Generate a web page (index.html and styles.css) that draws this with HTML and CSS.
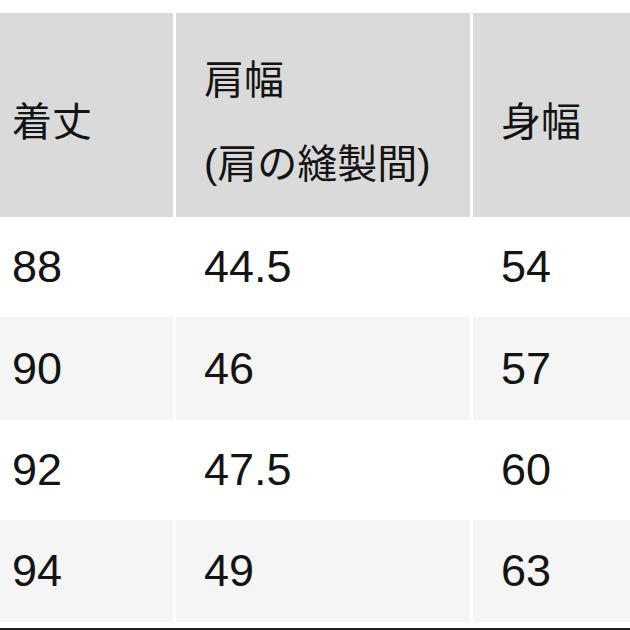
FILE: index.html
```html
<!DOCTYPE html>
<html lang="ja">
<head>
<meta charset="utf-8">
<link rel="stylesheet" href="styles.css">
</head>
<body>
<div class="page">
  <div class="table">
    <div class="cell head first"><span>着丈</span></div>
    <div class="cell head"><span>肩幅<br>(肩の縫製間)</span></div>
    <div class="cell head"><span>身幅</span></div>

    <div class="cell num first r1">88</div>
    <div class="cell num r1">44.5</div>
    <div class="cell num r1">54</div>

    <div class="cell num first r2 alt">90</div>
    <div class="cell num r2 alt">46</div>
    <div class="cell num r2 alt">57</div>

    <div class="cell num first r3">92</div>
    <div class="cell num r3">47.5</div>
    <div class="cell num r3">60</div>

    <div class="cell num first r4 alt">94</div>
    <div class="cell num r4 alt">49</div>
    <div class="cell num r4 alt">63</div>
  </div>
  <div class="rule"></div>
</div>
</body>
</html>
```

FILE: styles.css
```css
html, body {
  margin: 0;
  padding: 0;
  background: #ffffff;
}

.page {
  width: 630px;
  height: 630px;
  overflow: hidden;
  padding-top: 13px;
  box-sizing: border-box;
  font-family: "Liberation Sans", "Noto Sans CJK JP", sans-serif;
  color: #141414;
}

.table {
  display: grid;
  grid-template-columns: 173px 294px 1fr;
  grid-template-rows: 204px 100px 103px 100px 102px;
  column-gap: 3px;
}

.cell {
  display: flex;
  align-items: center;
  padding-left: 28px;
  box-sizing: border-box;
}

.cell.first {
  padding-left: 12px;
}

.head {
  background: #dadada;
  font-size: 40px;
  line-height: 84px;
  padding-top: 14px;
}

.num {
  font-size: 45px;
  background: #ffffff;
}

.num.alt {
  background: #f5f5f5;
}

.rule {
  margin-top: 6px;
  height: 3px;
  background: #1e1e1e;
}
```
